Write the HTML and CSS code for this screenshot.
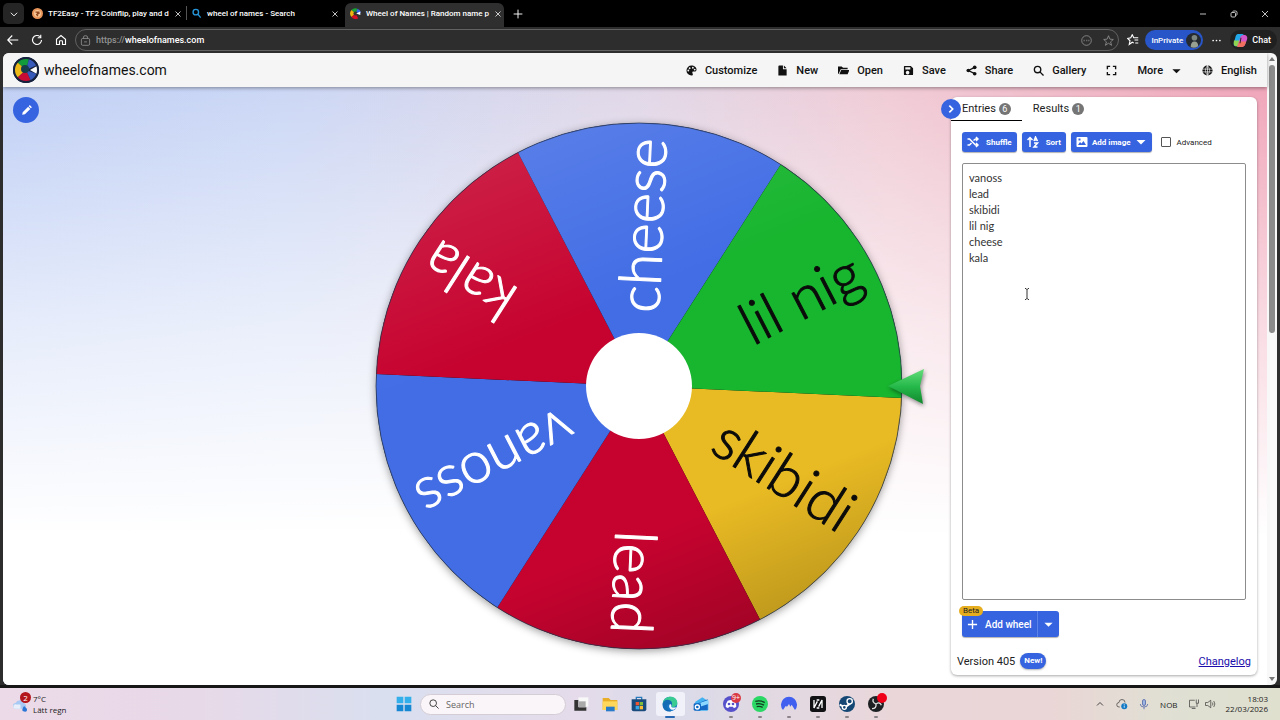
FILE: index.html
```html
<!DOCTYPE html>
<html lang="en">
<head>
    <meta charset="UTF-8">
    <meta name="viewport" content="width=device-width, initial-scale=1.0">
    <title>Wheel of Names | Random name picker</title>
    <link rel="stylesheet" href="styles.css">
</head>
<body>
    <!-- Browser tabs -->
    <div class="tabs">
        <button class="tab-menu" aria-label="Tab actions"><svg class="icon line" viewBox="0 0 16 16"><path d="M3 6l5 5 5-5"/></svg></button>
        <div class="tab">
            <svg class="favicon" viewBox="0 0 16 16"><circle cx="8" cy="8" r="8" fill="#e9965a"/><circle cx="8" cy="8" r="5" fill="#f8c795"/><path d="M5 6h6M8 6v6M6 10l5-3" stroke="#90481f" stroke-width="2"/></svg>
            <span class="tab-title">TF2Easy - TF2 Coinflip, play and d</span>
            <button class="tab-close" aria-label="Close tab"><svg class="icon line" viewBox="0 0 16 16"><path d="M3 3l10 10M13 3L3 13"/></svg></button>
        </div>
        <div class="tab divided">
            <svg class="favicon" viewBox="0 0 16 16" fill="none" stroke="#2695d8" stroke-width="2"><circle cx="7" cy="6" r="4"/><path d="M10 9l4 5"/></svg>
            <span class="tab-title">wheel of names - Search</span>
            <button class="tab-close" aria-label="Close tab"><svg class="icon line" viewBox="0 0 16 16"><path d="M3 3l10 10M13 3L3 13"/></svg></button>
        </div>
        <div class="tab active">
            <svg class="favicon" viewBox="0 0 16 16"><path d="M8 8L2 3a8 8 0 0 1 9-2z" fill="#18a334"/><path d="M8 8L11 1a8 8 0 0 1 5 6z" fill="#3369e8"/><path d="M8 8L2 3a8 8 0 0 0 0 10z" fill="#eeb211"/><path d="M8 8l-6 5a8 8 0 0 0 10 2z" fill="#d50f25"/><circle cx="8" cy="8" r="3" fill="#333"/><path d="M9 8l6-3v5z" fill="#fff"/></svg>
            <span class="tab-title">Wheel of Names | Random name p</span>
            <button class="tab-close" aria-label="Close tab"><svg class="icon line" viewBox="0 0 16 16"><path d="M3 3l10 10M13 3L3 13"/></svg></button>
        </div>
        <button class="new-tab" aria-label="New tab"><svg class="icon line" viewBox="0 0 16 16"><path d="M8 1v14M1 8h14"/></svg></button>
        <div class="window-controls">
            <button aria-label="Minimize"><svg class="icon line" viewBox="0 0 16 16"><path d="M2 8h12"/></svg></button>
            <button aria-label="Restore"><svg class="icon line" viewBox="0 0 16 16"><rect x="2" y="5" width="9" height="9" rx="2"/><path d="M5 3q1-1 3-1h3q3 0 3 3v3q0 2-1 3"/></svg></button>
            <button aria-label="Close"><svg class="icon line" viewBox="0 0 16 16"><path d="M2 2l12 12M14 2L2 14"/></svg></button>
        </div>
    </div>

    <!-- Address bar -->
    <div class="toolbar">
        <button class="tool" aria-label="Back"><svg class="icon line" viewBox="0 0 16 16"><path d="M15 8H1M7 2L1 8l6 6"/></svg></button>
        <button class="tool" aria-label="Refresh"><svg class="icon line" viewBox="0 0 16 16"><path d="M14 8a6 6 0 1 1-2-4.500M13 1v4H9"/></svg></button>
        <button class="tool" aria-label="Home"><svg class="icon line" viewBox="0 0 16 16"><path d="M2 7l6-5 6 5v7h-4v-4q0-1-1-1H7q-1 0-1 1v4H2z"/></svg></button>
        <label class="address">
            <svg class="icon line muted" viewBox="0 0 16 16"><rect x="2" y="5" width="12" height="10" rx="2"/><path d="M5 5V3q0-2 3-2t3 2v2M6 10h4"/></svg>
            <span class="scheme">https://</span>
            <input type="text" value="wheelofnames.com" aria-label="Address">
            <svg class="icon line muted" viewBox="0 0 16 16"><circle cx="8" cy="8" r="7"/><path d="M4 8h1M8 8h1M11 8h1" stroke-width="2"/></svg>
            <svg class="icon line muted star" viewBox="0 0 16 16"><path d="M8 1l2 5 5 .500-4 3.500 1.500 5L8 12l-4.500 3L5 10 1 6.500 6 6z"/></svg>
        </label>
        <button class="tool favorites" aria-label="Favorites"><svg class="icon line" viewBox="0 0 16 16"><path d="M9 12l-2-1-4 3 1-5-3-3 4-1 2-4 2 4h6M10 8h5M11 12h4"/></svg></button>
        <button class="inprivate">InPrivate
            <svg viewBox="0 0 16 16"><circle cx="8" cy="8" r="8" fill="#252a31"/><circle cx="9" cy="5" r="3" fill="#7d8580"/><path d="M5 15q0-6 4-6t4 5q-4 3-8 1z" fill="#98a092"/></svg>
        </button>
        <button class="tool dots" aria-label="Settings"><svg class="icon" viewBox="0 0 16 16" fill="currentColor"><circle cx="2" cy="8" r="1.500"/><circle cx="8" cy="8" r="1.500"/><circle cx="14" cy="8" r="1.500"/></svg></button>
        <button class="chat">
            <svg viewBox="0 0 16 16"><path d="M5 1h5q2 0 1 2L8 12q-1 2-3 2H3q-3 0-2-4l2-7q1-2 2-2z" fill="#22a7e8"/><path d="M1 8h8l-1 4q-1 2-3 2H3q-3 0-2-6z" fill="#8ed450"/><path d="M11 2h2q3 1 2 5l-2 5q-1 3-3 3H6q-2 0-1-2l3-9q1-2 3-2z" fill="#d556c8"/><path d="M7 9h7l-1 3q-1 3-3 3H6q-2 0-1-2z" fill="#f0705d"/><path d="M8 5h1l-1 6H7z" fill="#202020"/></svg>
            Chat
        </button>
    </div>

    <!-- Web page -->
    <div class="window">
        <div class="page">
            <header class="header">
                <a class="brand" href="#">
                    <svg viewBox="0 0 26 26"><circle cx="13" cy="13" r="13" fill="#15213d"/><path d="M13 13L4 5a12 12 0 0 1 12-3z" fill="#129b3b"/><path d="M13 13l3-11q5 1 8 6z" fill="#3659ba"/><path d="M13 13L4 5a12 12 0 0 0 0 16z" fill="#edb919"/><path d="M13 13l-9 8a12 12 0 0 0 14 3z" fill="#c70b35"/><path d="M13 13l5 11q5-2 6-7z" fill="#3659ba"/><circle cx="12" cy="12" r="4" fill="#173c4b"/><path d="M17 13l7-4v8z" fill="#fff"/><circle cx="13" cy="13" r="12" fill="none" stroke="#15213d" stroke-width="2"/></svg>
                    <span>wheelofnames.com</span>
                </a>
                <nav class="nav">
                    <button><svg viewBox="0 0 24 24"><path d="M12 1a11 11 0 0 0 0 22c2 0 3-1 3-3s-2-3-1-5 9 2 9-5C23 5 18 1 12 1zM5 14a2 2 0 1 1 0-4 2 2 0 0 1 0 4zm3-5a2 2 0 1 1 0-4 2 2 0 0 1 0 4zm7-1a2 2 0 1 1 0-4 2 2 0 0 1 0 4zm4 4a2 2 0 1 1 0-4 2 2 0 0 1 0 4z"/></svg>Customize</button>
                    <button><svg viewBox="0 0 24 24"><path d="M5 1h8v8h8v14H3V3q0-2 2-2zm10 0l6 6h-6z"/></svg>New</button>
                    <button><svg viewBox="0 0 24 24"><path d="M0 20V3h8l3 3h10v3H6L2 18zm3 0l4-9h18l-4 9z"/></svg>Open</button>
                    <button><svg viewBox="0 0 24 24" fill-rule="evenodd"><path d="M3 2h14l5 5v13q0 2-2 2H4q-2 0-2-2V4q0-2 1-2zm2 3v5h11V5zm7 8a4 4 0 1 0 0 7 4 4 0 0 0 0-7z"/></svg>Save</button>
                    <button><svg viewBox="0 0 24 24"><circle cx="5" cy="12" r="4"/><circle cx="19" cy="5" r="4"/><circle cx="19" cy="19" r="4"/><path d="M5 12l14-7M5 12l14 7" stroke="currentColor" stroke-width="3"/></svg>Share</button>
                    <button><svg viewBox="0 0 24 24" fill="none" stroke="currentColor" stroke-width="3"><circle cx="10" cy="10" r="7"/><path d="M15 15l8 8"/></svg>Gallery</button>
                    <button aria-label="Fullscreen"><svg viewBox="0 0 24 24" fill="none" stroke="currentColor" stroke-width="3"><path d="M3 9V3h6M15 3h6v6M21 15v6h-6M9 21H3v-6"/></svg></button>
                    <button>More<svg viewBox="0 0 24 24"><path d="M3 9h18l-9 9z"/></svg></button>
                    <button><svg viewBox="0 0 24 24"><circle cx="12" cy="12" r="11"/><path d="M1 9h22M1 15h22M12 1v22M12 1q-9 11 0 22M12 1q9 11 0 22" fill="none" stroke="#f5f5f5" stroke-width="1.500"/></svg>English</button>
                </nav>
            </header>

            <main class="main">
                <button class="round-button edit" aria-label="Edit title"><svg viewBox="0 0 24 24" fill="#fff"><path d="M4 20l1-5L15 5l4 4L9 19zM16 4l2-2 4 4-2 2z"/></svg></button>

                <svg class="wheel" viewBox="-299 -299 598 598" role="img" aria-label="Wheel">
                    <defs>
                        <linearGradient id="shade" x1="0.3" y1="0" x2="0.7" y2="1">
                            <stop offset="0" stop-color="#fff" stop-opacity="0.12"/>
                            <stop offset="0.35" stop-color="#fff" stop-opacity="0"/>
                            <stop offset="0.75" stop-color="#000" stop-opacity="0"/>
                            <stop offset="1" stop-color="#000" stop-opacity="0.2"/>
                        </linearGradient>
                        <linearGradient id="arrow" x1="0" y1="0" x2="0" y2="1">
                            <stop offset="0" stop-color="#65dc7b"/>
                            <stop offset="0.5" stop-color="#25b94a"/>
                            <stop offset="1" stop-color="#12872e"/>
                        </linearGradient>
                    </defs>
                    <circle class="wheel-base" r="263"/>
                    <!-- six 60 degree slices, the first one starts on the positive x axis -->
                    <g class="slices" transform="rotate(2.600)">
                        <path fill="#e8ba23" d="M0 0H263A263 263 0 0 1 131.500 227.800Z"/>
                        <path fill="#c6032f" d="M0 0H263A263 263 0 0 1 131.500 227.800Z" transform="rotate(60)"/>
                        <path fill="#426de5" d="M0 0H263A263 263 0 0 1 131.500 227.800Z" transform="rotate(120)"/>
                        <path fill="#c6032f" d="M0 0H263A263 263 0 0 1 131.500 227.800Z" transform="rotate(180)"/>
                        <path fill="#426de5" d="M0 0H263A263 263 0 0 1 131.500 227.800Z" transform="rotate(240)"/>
                        <path fill="#18b52f" d="M0 0H263A263 263 0 0 1 131.500 227.800Z" transform="rotate(300)"/>
                    </g>
                    <circle r="263" fill="url(#shade)" stroke="#26354f" stroke-opacity="0.7"/>
                    <g class="labels">
                        <text class="dark" x="248" y="17" transform="rotate(32.600)">skibidi</text>
                        <text x="248" y="17" transform="rotate(92.600)">lead</text>
                        <text x="248" y="17" transform="rotate(152.600)">vanoss</text>
                        <text x="248" y="17" transform="rotate(212.600)">kala</text>
                        <text x="248" y="17" transform="rotate(272.600)">cheese</text>
                        <text class="dark" x="248" y="17" transform="rotate(332.600)">lil nig</text>
                    </g>
                    <circle r="53" fill="#fff"/>
                    <path class="pointer" d="M249 0L285 -17L281 0L284 18Z" fill="url(#arrow)"/>
                </svg>

                <aside class="panel">
                    <button class="round-button collapse" aria-label="Hide panel"><svg viewBox="0 0 24 24" fill="none" stroke="#fff" stroke-width="4"><path d="M8 4l8 8-8 8"/></svg></button>
                    <div class="panel-tabs">
                        <button class="panel-tab selected">Entries <span class="count">6</span></button>
                        <button class="panel-tab">Results <span class="count">1</span></button>
                    </div>
                    <div class="panel-body">
                        <div class="actions">
                            <button class="button"><svg viewBox="0 0 24 24" fill="none" stroke="#fff" stroke-width="3"><path d="M1 6h4l12 12h5M1 18h4l4-4M13 9l4-3h5M18 2l4 4-4 4M18 14l4 4-4 4"/></svg><span>Shuffle</span></button>
                            <button class="button"><svg viewBox="0 0 24 24" fill="none" stroke="#fff" stroke-width="3"><path d="M6 22V3M1 8l5-5 5 5M14 10l3-8 4 8M15 8h5M14 14h7l-7 8h7"/></svg><span>Sort</span></button>
                            <button class="button tight"><svg viewBox="0 0 24 24" fill="#fff"><path fill-rule="evenodd" d="M3 2h18q2 0 2 2v16q0 2-2 2H3q-2 0-2-2V4q0-2 2-2zm1 16h16l-5-8-4 5-3-3zM5 5v4h4V5z"/></svg><span>Add image</span><svg viewBox="0 0 24 24" fill="#fff"><path d="M3 8h18l-9 9z"/></svg></button>
                            <label class="advanced"><input type="checkbox">Advanced</label>
                        </div>
                        <div class="entries">
                            <textarea aria-label="Entries" spellcheck="false">vanoss
lead
skibidi
lil nig
cheese
kala</textarea>
                            <svg class="caret" viewBox="0 0 6 12" fill="none" stroke="#333"><path d="M1 .500h1l1 1 1-1h1M3 1v10M1 11.500h1l1-1 1 1h1"/></svg>
                        </div>
                        <div class="add-wheel">
                            <button class="button"><svg viewBox="0 0 24 24" fill="none" stroke="#fff" stroke-width="3"><path d="M12 2v20M2 12h20"/></svg><span>Add wheel</span></button>
                            <button class="button more" aria-label="More wheel options"><svg viewBox="0 0 24 24" fill="#fff"><path d="M3 8h18l-9 9z"/></svg></button>
                            <span class="beta">Beta</span>
                        </div>
                    </div>
                    <div class="panel-footer">
                        <span>Version 405</span>
                        <span class="new">New!</span>
                        <a href="#">Changelog</a>
                    </div>
                </aside>
            </main>
        </div>
        <div class="scrollbar">
            <svg viewBox="0 0 8 8"><path d="M1 6h6L4 2z"/></svg>
            <div class="track"><div class="thumb"></div></div>
            <svg viewBox="0 0 8 8"><path d="M1 2h6L4 6z"/></svg>
        </div>
    </div>

    <!-- Taskbar -->
    <footer class="taskbar">
        <button class="weather">
            <svg viewBox="0 0 24 24"><path d="M6 18a4 4 0 0 1-1-8 7 7 0 0 1 13 1 4 4 0 0 1 0 7z" fill="#a8c9f3"/><path d="M4 18a3 3 0 0 1 2-6h6v6z" fill="#e8effb"/><path d="M17 14q-5 7 0 8t4-4z" fill="#2c76d5"/></svg>
            <span class="alert">2</span>
            <span>7°C<br>Lätt regn</span>
        </button>
        <div class="apps">
            <button class="start" aria-label="Start"><svg viewBox="0 0 24 24" fill="#1688d3"><path d="M1 1h10v10H1zM13 1h10v10H13z" fill="#33b0eb"/><path d="M1 13h10v10H1zM13 13h10v10H13z"/></svg></button>
            <label class="search"><svg viewBox="0 0 24 24" fill="none" stroke="#222" stroke-width="2"><circle cx="10" cy="10" r="8"/><path d="M16 16l7 7"/></svg><input type="text" placeholder="Search"></label>
            <div class="pinned">
                <button aria-label="Task view"><svg viewBox="0 0 24 24"><path d="M8 2h15v14H8z" fill="#f8f8f8"/><path d="M2 6h6v11h12v5H2z" fill="#333"/><path d="M9 8h10v9H9z" fill="#aaa"/></svg></button>
                <button aria-label="File Explorer"><svg viewBox="0 0 24 24"><path d="M1 3h9l3 3h10v15H1z" fill="#e8ae28"/><path d="M1 8h22v13H1z" fill="#ffd75b"/><path d="M6 16h13v7H6z" fill="#287bc8"/></svg></button>
                <button aria-label="Store"><svg viewBox="0 0 24 24"><path d="M8 6V2h8v4" fill="none" stroke="#287cbd" stroke-width="2"/><path d="M1 5h22v15q0 3-3 3H4q-3 0-3-3z" fill="#194c7c"/><path d="M7 9h5v5H7z" fill="#ef5432"/><path d="M13 9h5v5h-5z" fill="#80bd3a"/><path d="M7 15h5v5H7z" fill="#36a8ec"/><path d="M13 15h5v5h-5z" fill="#fcbd32"/></svg></button>
                <button class="current" aria-label="Edge"><svg viewBox="0 0 24 24"><circle cx="12" cy="12" r="11" fill="#1575c6"/><path d="M1 12C2-2 22-2 23 10c0 7-9 8-9 5 3-3 0-6-4-6-4 0-8 1-9 3z" fill="#3acb92"/><path d="M1 12C2 3 15 4 15 11c0 3-1 3-1 4q-3-5-6-1c-2 4 2 8 6 9C6 25 0 19 1 12z" fill="#126bb5"/><path d="M14 15c-1 3 6 3 8 1-1 4-6 6-9 4q-4-4-1-8 3 1 2 3z" fill="#f2f9ff"/></svg></button>
                <button aria-label="Outlook"><svg viewBox="0 0 24 24"><path d="M3 9l11-7 9 6v12q0 2-2 2H7z" fill="#44b1f1"/><path d="M5 12L22 5v16H7z" fill="#1569c5"/><path d="M9 11l14-5v6L8 17z" fill="#8ad8ff"/><rect x="1" y="11" width="11" height="11" rx="2" fill="#0d67c3"/><circle cx="6.500" cy="16.500" r="3" fill="none" stroke="#fff" stroke-width="2"/></svg></button>
                <button class="running" aria-label="Discord"><svg viewBox="0 0 24 24"><circle cx="12" cy="12" r="12" fill="#5650ca"/><path d="M7 7q5-2 10 0 3 4 3 9-2 2-4 2l-1-2H9l-1 2q-2 0-4-2 0-5 3-9z" fill="#fff"/><circle cx="9" cy="12" r="2" fill="#5650ca"/><circle cx="15" cy="12" r="2" fill="#5650ca"/></svg><span class="app-badge">9+</span></button>
                <button class="running" aria-label="Spotify"><svg viewBox="0 0 24 24"><circle cx="12" cy="12" r="12" fill="#2bd866"/><path d="M5 8q8-2 14 2M6 12q7-2 12 2M7 16q5-1 9 1" fill="none" stroke="#123d20" stroke-width="2"/></svg></button>
                <button class="running" aria-label="NordVPN"><svg viewBox="0 0 24 24"><path d="M3 21a12 12 0 1 1 18 0l-5-8-2 3-2-4-3 4-2-1z" fill="#4260ef"/></svg></button>
                <button class="running" aria-label="Launcher"><svg viewBox="0 0 24 24"><rect width="24" height="24" rx="4" fill="#101214"/><path d="M6 6v12L11 8M18 18V6l-5 10M10 6h4M10 18h4" fill="none" stroke="#fff" stroke-width="2"/></svg></button>
                <button class="running" aria-label="Steam"><svg viewBox="0 0 24 24"><circle cx="12" cy="12" r="12" fill="#154774"/><path d="M1 13l8 4 8-6" fill="none" stroke="#fff" stroke-width="3"/><circle cx="16" cy="8" r="4" fill="#154774" stroke="#fff" stroke-width="2"/><circle cx="8" cy="17" r="3" fill="#154774" stroke="#fff" stroke-width="2"/></svg></button>
                <button class="running" aria-label="OBS"><svg viewBox="0 0 24 24"><circle cx="12" cy="12" r="12" fill="#1d2023"/><path d="M12 12q-6-2-4-8M12 12q6-4 8 2M12 12q1 7-6 7" fill="none" stroke="#ddd" stroke-width="2"/></svg><span class="app-badge recording"></span></button>
            </div>
        </div>
        <div class="tray">
            <svg class="chevron" viewBox="0 0 16 16"><path d="M4 10l4-4 4 4"/></svg>
            <svg viewBox="0 0 16 16"><path d="M5 12H4a3 3 0 0 1 0-6 4 4 0 0 1 8 0"/><circle cx="11" cy="11" r="4" fill="#147ac6" stroke="none"/><path d="M11 10v3M11 8v1" stroke="#fff"/></svg>
            <svg viewBox="0 0 16 16"><rect x="6" y="2" width="4" height="8" rx="2" fill="#9eb5e3" stroke="#4960a5"/><path d="M3 8q0 4 5 4t5-4M8 12v3" stroke="#4960a5"/></svg>
            <span class="language">NOB</span>
            <span class="quick"><svg viewBox="0 0 16 16"><path d="M9 3H2v9h8M5 14h5M11 2v5h3V2M12 7v5"/></svg><svg viewBox="0 0 16 16"><path d="M2 6h3l4-3v10l-4-3H2zM11 6q2 2 0 4M13 4q3 4 0 8"/></svg></span>
            <span class="clock">18:03<br>22/03/2026</span>
        </div>
    </footer>
</body>
</html>
```
FILE: styles.css
```css
* {
    box-sizing: border-box;
}

body {
    display: flex;
    flex-direction: column;
    height: 100vh;
    margin: 0;
    overflow: hidden;
    background-color: #2d2d2d;
    font-family: Roboto, sans-serif;
    font-size: 11px;
    color: #222;
}

button {
    display: flex;
    align-items: center;
    justify-content: center;
    padding: 0;
    border: none;
    background: none;
    color: inherit;
    font: inherit;
    cursor: pointer;
}

input,
textarea {
    border: none;
    outline: none;
    background: none;
    font: inherit;
}

svg {
    flex: none;
}

.icon {
    width: 10px;
    height: 10px;
}

.line {
    fill: none;
    stroke: currentColor;
    stroke-width: 1.5;
}

/* Browser */
.tabs,
.toolbar {
    display: flex;
    flex: none;
    color: #fff;
}

.tabs {
    height: 27px;
    padding-left: 3px;
    background-color: #000;
    font-size: 8px;
    font-weight: 500;
}

.tab-menu {
    width: 21px;
    height: 21px;
    margin: 3px 3px 0 0;
    border-radius: 5px;
    background-color: #252525;
}

.tab {
    display: flex;
    align-items: center;
    gap: 5px;
    width: 159px;
    margin-top: 3px;
    padding: 0 6px 3px 5px;
}

.tab.divided {
    background: linear-gradient(#555, #555) 0 3px / 1px 14px no-repeat;
}

.tab.active {
    border-radius: 6px 6px 0 0;
    background-color: #2f2f2f;
}

.favicon {
    width: 11px;
    height: 11px;
}

.tab-title {
    flex: 1;
    white-space: nowrap;
}

.tab-close .icon {
    width: 8px;
    height: 8px;
}

.new-tab {
    width: 28px;
}

.window-controls {
    display: flex;
    margin-left: auto;
}

.window-controls button {
    width: 31px;
}

.window-controls .icon {
    width: 8px;
    height: 8px;
}

.toolbar {
    align-items: center;
    height: 26px;
    padding: 0 3px 0 1px;
}

.tool {
    width: 24px;
    height: 24px;
}

.tool .icon {
    width: 12px;
    height: 12px;
}

.address {
    display: flex;
    flex: 1;
    align-items: center;
    height: 22px;
    margin: 0 2px;
    padding: 0 4px;
    border: 1px solid #626262;
    border-radius: 11px;
    font-size: 9px;
    font-weight: 500;
}

.address input {
    flex: 1;
    padding: 0;
    color: #fff;
}

.scheme {
    margin-left: 5px;
    color: #929292;
}

.muted {
    color: #a5a5a5;
}

.address .icon {
    width: 11px;
    height: 11px;
    stroke-width: 1;
}

.address .star {
    margin-left: 11px;
}

.inprivate,
.chat {
    height: 20px;
    border-radius: 10px;
    font-size: 8px;
    font-weight: 500;
}

.inprivate {
    gap: 3px;
    padding: 0 2px 0 6px;
    background-color: #2856c8;
}

.inprivate svg,
.chat svg {
    width: 15px;
    height: 15px;
}

.dots {
    width: 27px;
}

.dots .icon {
    width: 9px;
    height: 9px;
}

.chat {
    gap: 4px;
    padding: 0 6px 0 3px;
    background-color: #202020;
    font-size: 9px;
}

/* Page */
.window {
    display: flex;
    flex: 1;
    min-height: 0;
    margin: 0 3px;
    border-radius: 6px;
    background-color: #f8f8f8;
    overflow: hidden;
}

.page {
    display: flex;
    flex: 1;
    flex-direction: column;
    min-width: 0;
}

.header {
    z-index: 1;
    display: flex;
    flex: none;
    align-items: center;
    justify-content: space-between;
    height: 34px;
    padding: 0 10px;
    background-color: #f5f5f5;
    box-shadow: 0 1px 4px rgba(0, 0, 0, 0.4);
    color: #111;
}

.brand {
    display: flex;
    align-items: center;
    gap: 5px;
    color: inherit;
    font-size: 14px;
    text-decoration: none;
}

.brand svg {
    width: 26px;
    height: 26px;
}

.nav {
    display: flex;
    gap: 20px;
    font-weight: 500;
}

.nav button {
    gap: 8px;
}

.nav svg {
    width: 11px;
    height: 11px;
    fill: currentColor;
}

.nav svg[fill="none"] {
    fill: none;
}

.main {
    display: grid;
    grid-template-columns: 1fr auto 1fr;
    grid-template-rows: 100%;
    flex: 1;
    min-height: 0;
    padding-left: 8px;
    background:
        linear-gradient(to bottom, rgba(255, 255, 255, 0) 0%, rgba(255, 255, 255, 0.6) 40%, #fff 75%),
        linear-gradient(to right, #c1d0f5 0%, #cbd7f5 22%, #e1d8e8 50%, #f0ccd6 70%, #f0a6ba 100%);
}

.round-button {
    border-radius: 50%;
    background-color: #3664e0;
}

.edit {
    width: 26px;
    height: 26px;
    margin: 10px 2px;
}

.edit svg {
    width: 13px;
    height: 13px;
}

.wheel {
    height: 100%;
    aspect-ratio: 1;
}

.wheel-base {
    filter: drop-shadow(0 2px 4px rgba(0, 0, 0, 0.4));
}

.labels {
    font-family: Lato, sans-serif;
    font-size: 58px;
    font-weight: 300;
    fill: #fff;
    stroke: #fff;
    stroke-width: 1;
    stroke-linejoin: round;
    text-anchor: end;
}

.labels .dark {
    fill: #0b0b0b;
    stroke: #0b0b0b;
}

.pointer {
    filter: drop-shadow(1px 2px 2px rgba(0, 0, 0, 0.45));
}

/* Side panel */
.panel {
    position: relative;
    display: flex;
    flex-direction: column;
    justify-self: end;
    width: 306px;
    margin: 10px 10px 10px 0;
    border-radius: 6px;
    background-color: #fff;
    box-shadow: 0 1px 3px rgba(0, 0, 0, 0.35);
}

.collapse {
    position: absolute;
    top: 2px;
    left: -10px;
    width: 20px;
    height: 20px;
}

.collapse svg {
    width: 10px;
    height: 10px;
}

.panel-tabs {
    display: flex;
    height: 24px;
}

.panel-tab {
    gap: 3px;
    padding: 0 11px;
    border-bottom: 1px solid transparent;
}

.panel-tab.selected {
    border-color: #000;
}

.count {
    width: 12px;
    height: 12px;
    border-radius: 50%;
    background-color: #757575;
    color: #fff;
    font-size: 9px;
    line-height: 12px;
}

.panel-body {
    display: flex;
    flex: 1;
    flex-direction: column;
    gap: 11px;
    padding: 11px 11px 0;
}

.actions {
    display: flex;
    gap: 5px;
}

.button {
    gap: 7px;
    height: 20px;
    padding: 0 5px;
    border-radius: 3px;
    background-color: #3664e0;
    box-shadow: 0 1px 1px rgba(0, 0, 0, 0.3);
    color: #fff;
    font-size: 8px;
    font-weight: 700;
}

.button svg {
    width: 12px;
    height: 12px;
}

.button.tight {
    gap: 4px;
}

.advanced {
    display: flex;
    align-items: center;
    gap: 6px;
    margin-left: 4px;
    font-size: 8px;
}

.advanced input {
    appearance: none;
    width: 10px;
    height: 10px;
    margin: 0;
    border: 1px solid #555;
    border-radius: 1px;
}

.entries {
    position: relative;
    display: flex;
    flex: 1;
}

.entries textarea {
    flex: 1;
    padding: 6px;
    border: 1px solid #8c8c8c;
    border-radius: 2px;
    color: #333;
    font-family: Lato, sans-serif;
    font-size: 11px;
    line-height: 16px;
    resize: none;
}

.caret {
    position: absolute;
    top: 125px;
    left: 62px;
    width: 6px;
    height: 12px;
}

.add-wheel {
    position: relative;
    display: flex;
}

.add-wheel .button {
    height: 26px;
    border-radius: 3px 0 0 3px;
    font-size: 10px;
    font-weight: 500;
}

.add-wheel .more {
    border-left: 1px solid #5a84ea;
    border-radius: 0 3px 3px 0;
}

.add-wheel svg {
    width: 11px;
    height: 11px;
}

.beta {
    position: absolute;
    top: -5px;
    left: -3px;
    padding: 0 4px;
    border-radius: 5px;
    background-color: #e6ae1e;
    color: #222;
    font-size: 8px;
    line-height: 10px;
}

.panel-footer {
    display: flex;
    align-items: center;
    gap: 5px;
    height: 38px;
    padding: 10px 6px 0;
}

.new {
    padding: 0 4px;
    border-radius: 8px;
    background-color: #3664e0;
    box-shadow: 0 1px 2px rgba(0, 0, 0, 0.3);
    color: #fff;
    font-size: 8px;
    font-weight: 700;
    line-height: 16px;
}

.panel-footer a {
    margin-left: auto;
    color: #1a0dab;
}

.scrollbar {
    display: flex;
    flex: none;
    flex-direction: column;
    align-items: center;
    width: 10px;
    padding: 2px 0;
}

.scrollbar svg {
    width: 8px;
    height: 8px;
    fill: #777;
}

.track {
    flex: 1;
    padding: 2px 0;
}

.thumb {
    width: 6px;
    height: 44%;
    border-radius: 3px;
    background-color: #8b8b8b;
}

/* Taskbar */
.taskbar {
    display: flex;
    flex: none;
    justify-content: space-between;
    height: 35px;
    border-top: 3px solid #171717;
    background: linear-gradient(to right, #ecdae8 0%, #e8d9e8 15%, #d9dfef 30%, #e5dbea 45%, #dadbea 52%, #ead6d9 70%, #ead6d6 82%, #dfe0d3 92%, #e0e0cf 100%);
    font-family: "Open Sans", sans-serif;
    font-size: 8px;
}

.weather,
.tray {
    flex: 1;
}

.weather {
    position: relative;
    justify-content: flex-start;
    gap: 4px;
    padding-left: 12px;
    line-height: 11px;
    text-align: left;
}

.weather svg {
    width: 17px;
    height: 17px;
}

.alert {
    position: absolute;
    top: 4px;
    left: 20px;
    width: 11px;
    height: 11px;
    border-radius: 50%;
    background-color: #b3161c;
    color: #fff;
    text-align: center;
}

.apps {
    display: flex;
    align-items: center;
    width: 502px;
}

.start {
    width: 29px;
}

.start svg,
.pinned svg {
    width: 16px;
    height: 16px;
}

.search {
    display: flex;
    align-items: center;
    gap: 7px;
    width: 146px;
    height: 21px;
    margin-left: 2px;
    padding: 0 8px;
    border: 1px solid #d5cdd6;
    border-radius: 11px;
    background-color: #faf5f8;
    font-size: 9px;
}

.search svg {
    width: 10px;
    height: 10px;
}

.search input {
    width: 90px;
    padding: 0;
}

.search input::placeholder {
    color: #666;
}

.pinned {
    display: flex;
    flex: 1;
    height: 100%;
}

.pinned button {
    position: relative;
    flex: 1;
}

.pinned .current {
    margin: 4px 2px;
    border-radius: 3px;
    background-color: #f1f1fa;
}

.running::after,
.current::after {
    content: "";
    position: absolute;
    bottom: 2px;
    width: 4px;
    height: 2px;
    border-radius: 1px;
    background-color: #8b8589;
}

.current::after {
    bottom: -2px;
    width: 10px;
    background-color: #2867b2;
}

.app-badge {
    position: absolute;
    top: 5px;
    right: 4px;
    width: 10px;
    height: 10px;
    border-radius: 50%;
    background-color: #d93a45;
    color: #fff;
    font-size: 7px;
    line-height: 10px;
}

.app-badge.recording {
    background-color: #f00018;
}

.tray {
    display: flex;
    align-items: center;
    justify-content: flex-end;
    gap: 10px;
    padding-right: 12px;
}

.tray svg {
    width: 12px;
    height: 12px;
    fill: none;
    stroke: #444;
}

.tray .chevron {
    stroke: #111;
}

.quick {
    display: flex;
    gap: 4px;
}

.clock {
    line-height: 10px;
    text-align: right;
}
```
